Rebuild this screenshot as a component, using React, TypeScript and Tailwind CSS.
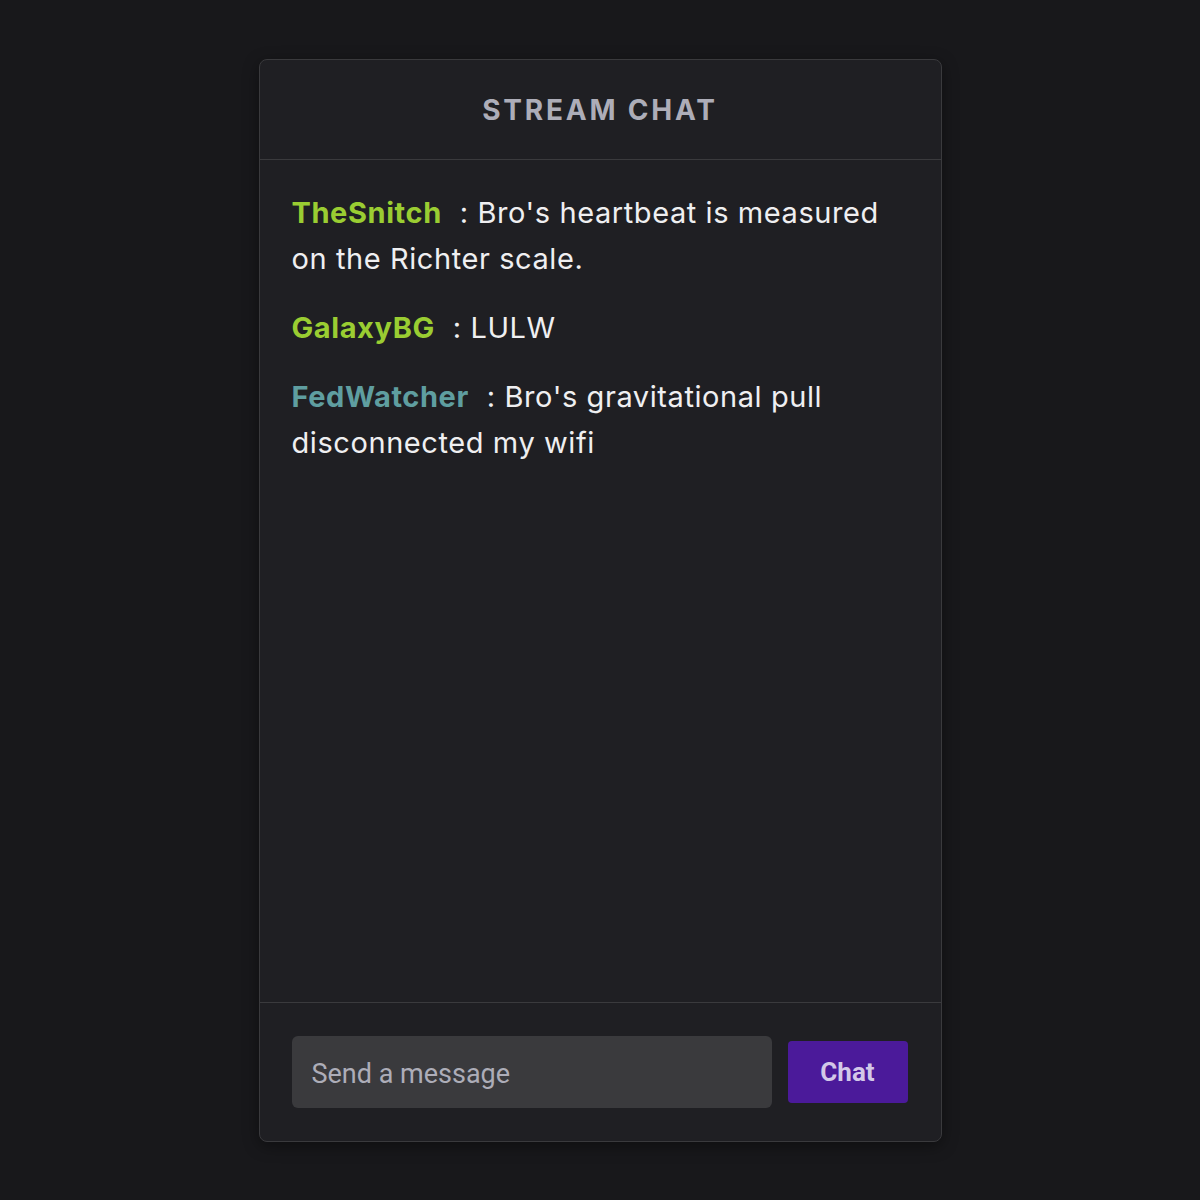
import React from "react";

const messages = [
  { user: "TheSnitch", color: "text-[#9acd32]", text: "Bro's heartbeat is measured on the Richter scale." },
  { user: "GalaxyBG", color: "text-[#9acd32]", text: "LULW" },
  { user: "FedWatcher", color: "text-[#5f9ea0]", text: "Bro's gravitational pull disconnected my wifi" },
];

export default function App() {
  return (
    <div className="min-h-screen w-full bg-[#18181b] flex justify-center pt-[59px]" style={{ fontFamily: "Inter, 'Noto Sans', sans-serif" }}>
      <div className="w-[683px] h-[1083px] flex flex-col rounded-lg border border-[#3a3a3d] bg-[#1f1f23] shadow-[0_4px_16px_rgba(0,0,0,0.4)] overflow-hidden">
        <div className="h-[100px] shrink-0 flex items-center justify-center border-b border-[#3a3a3d]">
          <span className="text-[28px] font-bold tracking-[0.1em] text-[#adadb8]">STREAM CHAT</span>
        </div>
        <div className="flex-1 px-8 pt-[30px] flex flex-col gap-[23px]">
          {messages.map((m) => (
            <p key={m.user} className="text-[29px] leading-[46px] tracking-[0.02em] text-[#efeff1]">
              <span className={`font-bold ${m.color} mr-[18px]`}>{m.user}</span>
              {": " + m.text}
            </p>
          ))}
        </div>
        <div className="h-[139px] shrink-0 border-t border-[#3a3a3d] flex items-center px-8 gap-4">
          <div className="w-[480px] h-[72px] rounded-md bg-[#3a3a3d] flex items-center px-5">
            <span className="text-[27px] text-[#adadb8] mt-[5px]" style={{ fontFamily: "Roboto, sans-serif" }}>Send a message</span>
          </div>
          <button className="w-[120px] h-[62px] rounded bg-[#4b1a9a] flex items-center justify-center text-[26px] font-bold text-[#d3c8e8]" style={{ fontFamily: "Roboto, sans-serif" }}>
            Chat
          </button>
        </div>
      </div>
    </div>
  );
}
